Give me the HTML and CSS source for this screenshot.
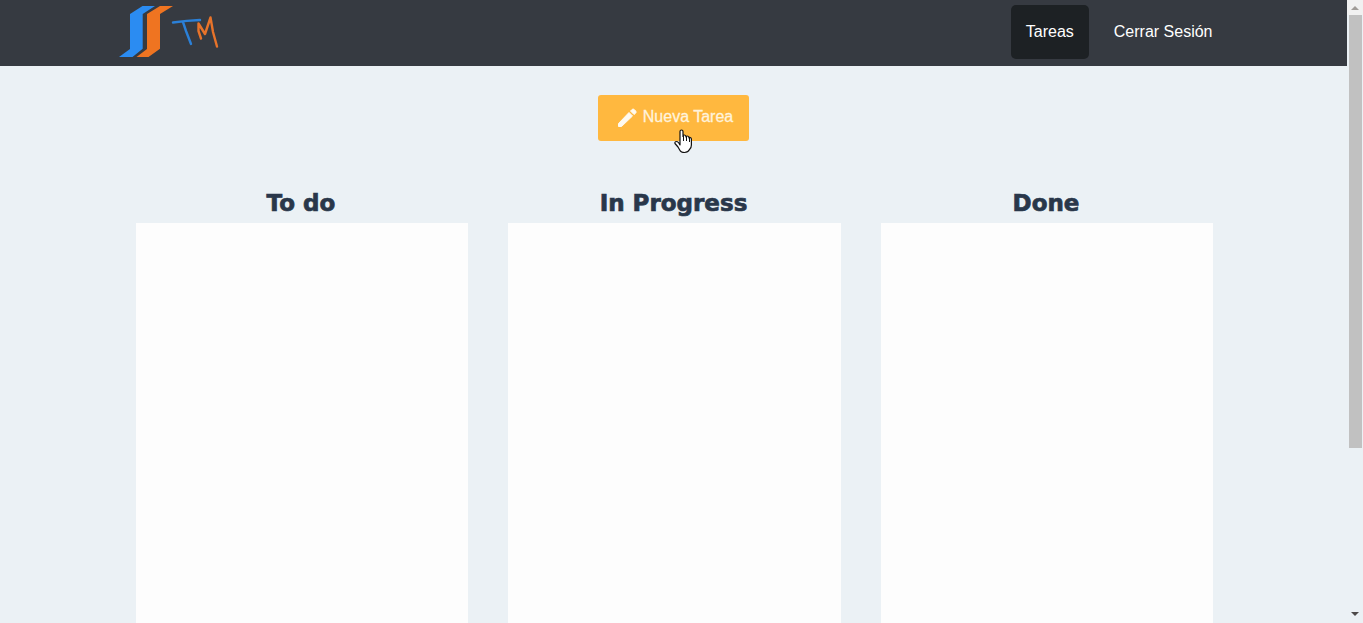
FILE: index.html
```html
<!DOCTYPE html>
<html lang="es">
<head>
<meta charset="utf-8">
<meta name="viewport" content="width=device-width, initial-scale=1">
<title>Tareas</title>
<link rel="stylesheet" href="styles.css">
</head>
<body>
<div class="page">
  <header class="header">
    <div class="header-inner">
      <a class="logo" href="#" aria-label="Inicio">
        <svg width="102" height="54" viewBox="0 0 102 54" aria-hidden="true">
          <path fill="#2b8cf2" d="M23.500 1H36L23.700 9V43.700L13.500 52H0L11 44V9Z"/>
          <path fill="#ef7421" d="M41 1H54L41 9V43.700L29.500 52H17.500L28 44V9Z"/>
          <path fill="none" stroke="#2b80d8" stroke-width="2.400" stroke-linecap="round" stroke-linejoin="round" d="M54 17.500Q68 15.500 81 15M64 17L67 26L72 39"/>
          <path fill="none" stroke="#e8732a" stroke-width="2.400" stroke-linecap="round" stroke-linejoin="round" d="M82 33.500L79.500 26V18.500L86 29L91.500 12.500L94 27L98 41.500"/>
        </svg>
      </a>
      <nav class="nav">
        <a class="nav-link active" href="#" aria-current="page">Tareas</a>
        <a class="nav-link" href="#">Cerrar Sesión</a>
      </nav>
    </div>
  </header>
  <main class="main">
    <div class="actions">
      <button class="new-task" type="button">
        <svg width="24" height="24" viewBox="0 0 24 24" aria-hidden="true"><path fill="#fffaf0" stroke="#fffaf0" stroke-linejoin="round" d="M3.500 17.500V20.500H6.500L17.500 10L14 6.500ZM15.500 5L19 8.500L20.800 7Q21.500 6 20.700 5L19 3.300Q18 2.700 17 3.500Z"/></svg>
        <span>Nueva Tarea</span>
        <svg class="pointer" width="19" height="25" viewBox="0 0 19 25" aria-hidden="true"><path fill="#fff" stroke="#111" stroke-width="1.200" stroke-linejoin="round" d="M6 14V2.500Q6 1 7.500 1T9 2.500V7.500Q9 6 10.500 6T12 8Q12 7 13.500 7T15 9Q15 8 16.200 8.500T17.400 10V16Q17.400 19 15.500 20.500Q14 23.500 10.500 23.500T6 21.500L4 18L1 14.500Q.500 12.500 2.500 12.500T6 16Z"/><path fill="none" stroke="#111" d="M9.500 7V12M12.500 8V12M15.500 9V13"/></svg>
      </button>
    </div>
    <div class="board">
      <section class="column"><h2>To do</h2><div class="list"></div></section>
      <section class="column"><h2>In Progress</h2><div class="list"></div></section>
      <section class="column"><h2>Done</h2><div class="list"></div></section>
    </div>
  </main>
</div>
<div class="scrollbar" aria-hidden="true">
  <div class="scroll-top"><svg width="8" height="4" viewBox="0 0 8 4"><path fill="#a09c98" d="M4 0L8 4H0Z"/></svg></div>
  <div class="thumb"></div>
  <div class="scroll-bottom"><svg width="8" height="4" viewBox="0 0 8 4"><path fill="#4d4a4a" d="M0 0H8L4 4Z"/></svg></div>
</div>
</body>
</html>
```

FILE: styles.css
```css
* {
  box-sizing: border-box;
}

body {
  display: flex;
  height: 100vh;
  margin: 0;
  overflow: hidden;
  background: #ebf1f5;
  font-family: "Liberation Sans", Arial, sans-serif;
  font-size: 16px;
}

.page {
  display: flex;
  flex: 1;
  flex-direction: column;
  min-width: 0;
}

.header {
  background: #363a41;
}

.header-inner {
  display: flex;
  align-items: center;
  justify-content: space-between;
  max-width: 1140px;
  margin: 0 auto;
  padding: 5px 16px 7px 15px;
}

.logo,
.logo svg {
  display: block;
}

.nav {
  display: flex;
  gap: 10px;
}

.nav-link {
  padding: 0 15px;
  border-radius: 5px;
  color: #fff;
  line-height: 54px;
  text-decoration: none;
}

.nav-link.active {
  background: #1d2124;
}

.main {
  display: flex;
  flex: 1;
  flex-direction: column;
  width: 80%;
  margin: 0 auto;
  padding-top: 29px;
}

.actions {
  display: flex;
  justify-content: center;
}

.new-task {
  position: relative;
  display: flex;
  align-items: center;
  gap: 4px;
  height: 46px;
  padding: 0 16px 0 17px;
  border: 0;
  border-radius: 3px;
  background: #ffb83f;
  color: #fff3dc;
  font: inherit;
  -webkit-text-stroke: 0.3px #fff3dc;
  cursor: pointer;
}

.new-task span {
  padding-bottom: 3px;
}

.pointer {
  position: absolute;
  top: 34px;
  left: 76px;
}

.board {
  display: grid;
  flex: 1;
  grid-template-columns: repeat(3, 1fr);
  gap: 40px;
  margin-top: 46px;
}

.column {
  display: flex;
  flex-direction: column;
}

.column h2 {
  margin: 0;
  padding-bottom: 4px;
  color: #29374a;
  font: bold 23px/32px "DejaVu Sans", Verdana, sans-serif;
  text-align: center;
  -webkit-text-stroke: 0.7px #29374a;
}

.list {
  flex: 1;
  margin: 0 -1px 0 1px;
  background: #fdfdfd;
}

.scrollbar {
  display: flex;
  flex-direction: column;
  width: 16px;
}

.scroll-top,
.scroll-bottom {
  display: flex;
  align-items: center;
  justify-content: center;
  height: 15px;
}

.scroll-top {
  background: #f1f1f1;
}

.thumb {
  flex: 0 0 433px;
  margin: 0 1px 0 2px;
  background: #c1c1c1;
}

.scroll-bottom {
  height: 18px;
  margin-top: auto;
}
```
